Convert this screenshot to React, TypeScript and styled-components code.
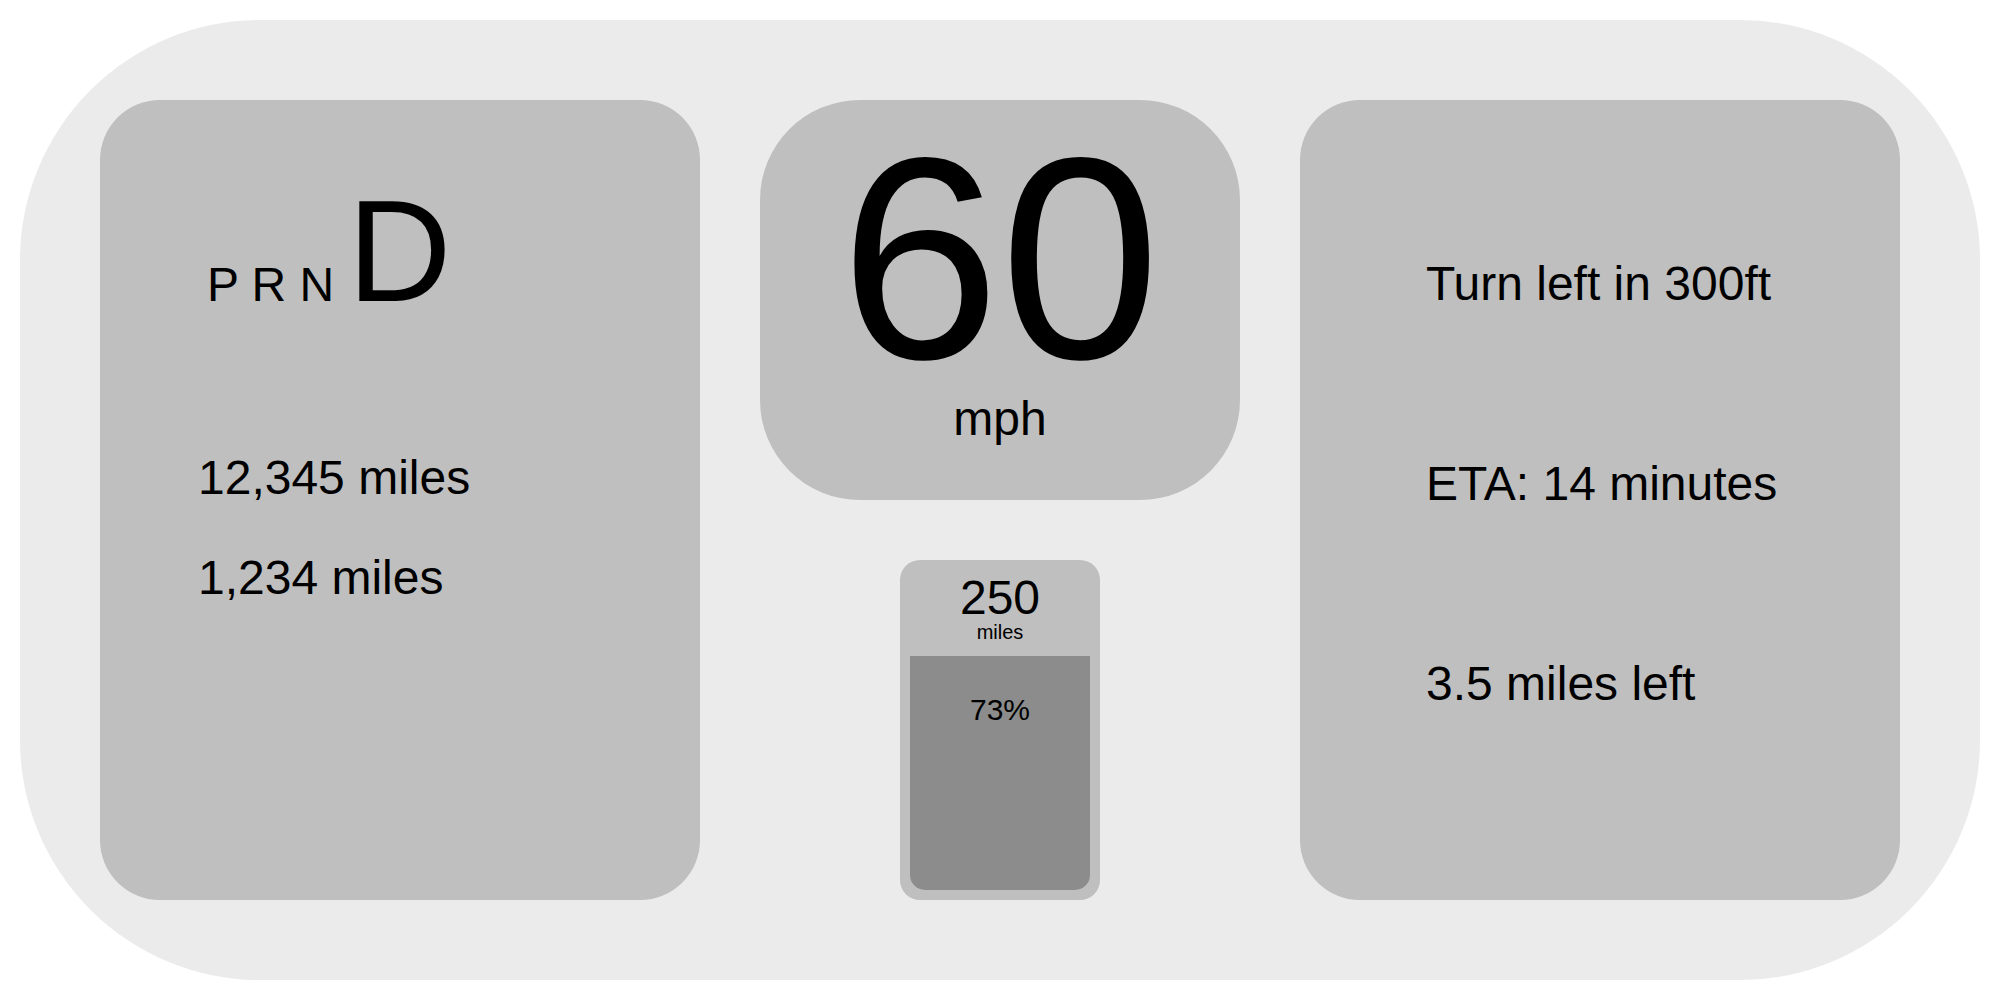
import React from 'react';
import styled, { createGlobalStyle } from 'styled-components';

const GlobalStyle = createGlobalStyle`
  html, body {
    margin: 0;
    padding: 0;
    background: #ffffff;
  }

  body {
    font-family: 'Liberation Sans', Arial, Helvetica, sans-serif;
    color: #000000;
  }
`;

const Page = styled.div`
  box-sizing: border-box;
  width: 2000px;
  padding: 20px;
`;

const Dashboard = styled.main`
  box-sizing: border-box;
  width: 1960px;
  height: 960px;
  padding: 80px;
  display: flex;
  gap: 60px;
  background: #ebebeb;
  border-radius: 240px;
`;

const Panel = styled.section`
  box-sizing: border-box;
  width: 600px;
  height: 800px;
  display: flex;
  flex-direction: column;
  align-items: flex-start;
  background: #bfbfbf;
  border-radius: 60px;
`;

const DrivePanel = styled(Panel)`
  padding: 69px 0 0 98px;
`;

const NavPanel = styled(Panel)`
  padding: 156px 0 0 126px;
  gap: 145px;
`;

const GearRow = styled.div`
  margin-left: 9px;
  font-size: 48px;
  white-space: pre;
`;

const ActiveGear = styled.span`
  font-size: 144px;
`;

const Reading = styled.div<{ $offset?: number }>`
  font-size: 48px;
  margin-top: ${props => props.$offset ?? 0}px;
`;

const CenterColumn = styled.div`
  width: 480px;
  display: flex;
  flex-direction: column;
  align-items: center;
  gap: 60px;
`;

const SpeedCard = styled.div`
  box-sizing: border-box;
  width: 480px;
  height: 400px;
  padding-top: 26px;
  display: flex;
  flex-direction: column;
  align-items: center;
  background: #bfbfbf;
  border-radius: 100px;
`;

const SpeedValue = styled.div`
  font-size: 288px;
  line-height: 265px;
`;

const SpeedUnit = styled.div`
  font-size: 48px;
`;

const Battery = styled.div`
  box-sizing: border-box;
  width: 200px;
  height: 340px;
  padding: 10px;
  background: #bfbfbf;
  border-radius: 20px;
`;

const BatteryTrack = styled.div`
  position: relative;
  height: 100%;
`;

const BatteryHeader = styled.div`
  padding-top: 4px;
  display: flex;
  flex-direction: column;
  align-items: center;
`;

const Range = styled.div`
  font-size: 48px;
  line-height: 48px;
`;

const RangeUnit = styled.div`
  font-size: 20px;
  line-height: 20px;
`;

const BatteryFill = styled.div`
  position: absolute;
  left: 0;
  right: 0;
  bottom: 0;
  box-sizing: border-box;
  padding-top: 37px;
  text-align: center;
  font-size: 30px;
  background: #8c8c8c;
  border-radius: 0 0 15px 15px;
`;

const charge = 73;

export default function App() {
  return (
    <>
      <GlobalStyle />
      <Page>
        <Dashboard>
          <DrivePanel>
            <GearRow>
              {'P R N '}
              <ActiveGear>D</ActiveGear>
            </GearRow>
            <Reading $offset={115}>12,345 miles</Reading>
            <Reading $offset={45}>1,234 miles</Reading>
          </DrivePanel>

          <CenterColumn>
            <SpeedCard>
              <SpeedValue>60</SpeedValue>
              <SpeedUnit>mph</SpeedUnit>
            </SpeedCard>

            <Battery>
              <BatteryTrack>
                <BatteryHeader>
                  <Range>250</Range>
                  <RangeUnit>miles</RangeUnit>
                </BatteryHeader>
                <BatteryFill style={{ height: `${charge}%` }}>{charge}%</BatteryFill>
              </BatteryTrack>
            </Battery>
          </CenterColumn>

          <NavPanel>
            <Reading>Turn left in 300ft</Reading>
            <Reading>ETA: 14 minutes</Reading>
            <Reading>3.5 miles left</Reading>
          </NavPanel>
        </Dashboard>
      </Page>
    </>
  );
}
